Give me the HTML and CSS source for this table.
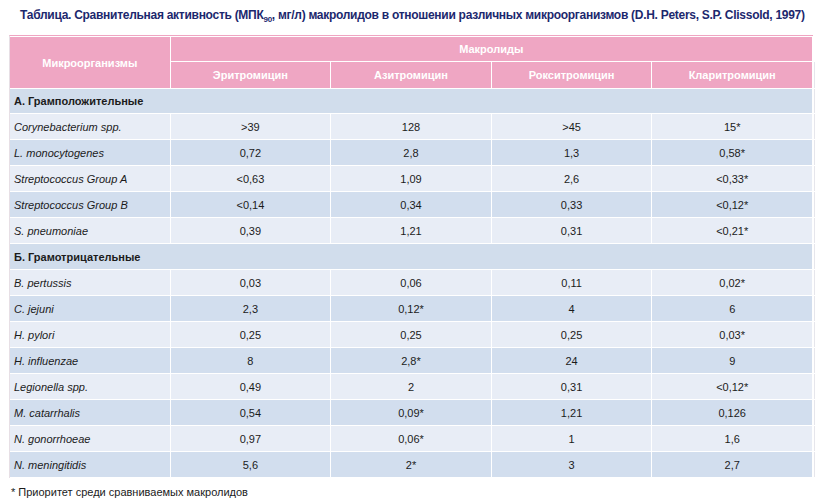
FILE: index.html
```html
<!DOCTYPE html>
<html lang="ru">
<head>
<meta charset="utf-8">
<title>Таблица</title>
<link rel="stylesheet" href="styles.css">
</head>
<body>
<h1 class="title">Таблица. Сравнительная активность (МПК<sub>90</sub>, мг/л) макролидов в отношении различных микроорганизмов (D.H. Peters, S.P. Clissold, 1997)</h1>
<div class="frame">
<table class="grid">
<thead>
<tr class="h1">
<th rowspan="2" class="hname">Микроорганизмы</th>
<th colspan="4">Макролиды</th>
</tr>
<tr class="h2">
<th>Эритромицин</th>
<th>Азитромицин</th>
<th>Рокситромицин</th>
<th class="last">Кларитромицин</th>
</tr>
</thead>
<tbody>
<tr class="group first"><td colspan="5" class="last">А. Грамположительные</td></tr>
<tr class="light"><td class="name">Corynebacterium spp.</td><td>&gt;39</td><td>128</td><td>&gt;45</td><td class="last">15*</td></tr>
<tr class="dark"><td class="name">L. monocytogenes</td><td>0,72</td><td>2,8</td><td>1,3</td><td class="last">0,58*</td></tr>
<tr class="light"><td class="name">Streptococcus Group A</td><td>&lt;0,63</td><td>1,09</td><td>2,6</td><td class="last">&lt;0,33*</td></tr>
<tr class="dark"><td class="name">Streptococcus Group B</td><td>&lt;0,14</td><td>0,34</td><td>0,33</td><td class="last">&lt;0,12*</td></tr>
<tr class="light"><td class="name">S. pneumoniae</td><td>0,39</td><td>1,21</td><td>0,31</td><td class="last">&lt;0,21*</td></tr>
<tr class="group"><td colspan="5" class="last">Б. Грамотрицательные</td></tr>
<tr class="light"><td class="name">B. pertussis</td><td>0,03</td><td>0,06</td><td>0,11</td><td class="last">0,02*</td></tr>
<tr class="dark"><td class="name">C. jejuni</td><td>2,3</td><td>0,12*</td><td>4</td><td class="last">6</td></tr>
<tr class="light"><td class="name">H. pylori</td><td>0,25</td><td>0,25</td><td>0,25</td><td class="last">0,03*</td></tr>
<tr class="dark"><td class="name">H. influenzae</td><td>8</td><td>2,8*</td><td>24</td><td class="last">9</td></tr>
<tr class="light"><td class="name">Legionella spp.</td><td>0,49</td><td>2</td><td>0,31</td><td class="last">&lt;0,12*</td></tr>
<tr class="dark"><td class="name">M. catarrhalis</td><td>0,54</td><td>0,09*</td><td>1,21</td><td class="last">0,126</td></tr>
<tr class="light"><td class="name">N. gonorrhoeae</td><td>0,97</td><td>0,06*</td><td>1</td><td class="last">1,6</td></tr>
<tr class="dark"><td class="name">N. meningitidis</td><td>5,6</td><td>2*</td><td>3</td><td class="last">2,7</td></tr>
</tbody>
</table>
</div>
<p class="note">* Приоритет среди сравниваемых макролидов</p>
</body>
</html>
```
FILE: styles.css
```css
html, body {
  margin: 0;
  padding: 0;
  background: #ffffff;
}
body {
  font-family: "Liberation Sans", Arial, sans-serif;
  color: #1b1b1b;
  width: 822px;
  height: 504px;
  overflow: hidden;
}
.title {
  margin: 0;
  padding: 8px 0 0 20px;
  height: 27px;
  box-sizing: border-box;
  font-size: 12px;
  font-weight: bold;
  color: #1c286e;
  letter-spacing: -0.28px;
  white-space: nowrap;
  line-height: 14px;
}
.title sub {
  font-size: 8px;
  line-height: 0;
  vertical-align: -3px;
}
.frame {
  margin: 8px 0 0 9px;
  width: 803px;
  border-top: 1px solid #efa5c2;
  border-left: 1px solid #e7dfe5;
}
.grid {
  margin-left: -1px;
  border-collapse: separate;
  border-spacing: 1px;
  width: 804px;
  table-layout: fixed;
  font-size: 11px;
}
.grid th {
  background: #efa6c3;
  color: #ffffff;
  font-weight: bold;
  text-align: center;
  padding: 0;
}
.h1 th { height: 24px; }
.h2 th { height: 26px; }
.grid td {
  height: 25px;
  padding: 0;
  text-align: center;
}
.grid tr.first td { height: 24px; }
.grid td.name {
  text-align: left;
  padding-left: 4px;
  font-style: italic;
}
.group td {
  background: #d1ddec;
  text-align: left;
  padding-left: 4px;
  font-weight: bold;
}
.light td { background: #e8edf6; }
.dark td { background: #d2deee; }
.grid .last {
  box-shadow: 2px 0 0 #ffffff, 3px 0 0 #e6e6ec;
}
.note {
  margin: 8px 0 0 11px;
  font-size: 11px;
  line-height: 13px;
  color: #1b1b1b;
}
```
